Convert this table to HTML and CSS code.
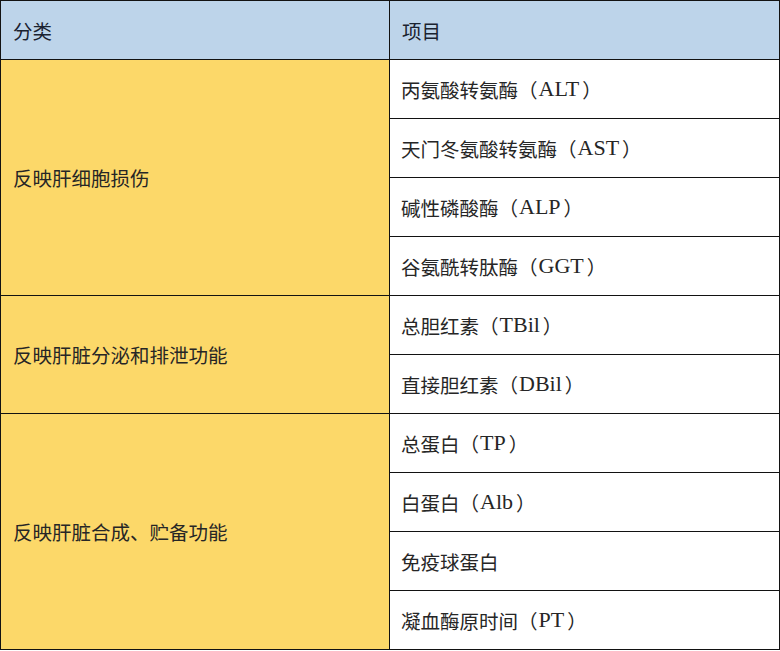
FILE: index.html
```html
<!DOCTYPE html>
<html lang="zh">
<head>
<meta charset="utf-8">
<link rel="stylesheet" href="styles.css">
</head>
<body>
<div class="table">
  <div class="cell head">分类</div>
  <div class="cell head">项目</div>

  <div class="cell cat span4">反映肝细胞损伤</div>
  <div class="cell item">丙氨酸转氨酶（<span class="en">ALT</span>）</div>
  <div class="cell item">天门冬氨酸转氨酶（<span class="en">AST</span>）</div>
  <div class="cell item">碱性磷酸酶（<span class="en">ALP</span>）</div>
  <div class="cell item">谷氨酰转肽酶（<span class="en">GGT</span>）</div>

  <div class="cell cat span2">反映肝脏分泌和排泄功能</div>
  <div class="cell item">总胆红素（<span class="en">TBil</span>）</div>
  <div class="cell item">直接胆红素（<span class="en">DBil</span>）</div>

  <div class="cell cat span4">反映肝脏合成、贮备功能</div>
  <div class="cell item">总蛋白（<span class="en">TP</span>）</div>
  <div class="cell item">白蛋白（<span class="en">Alb</span>）</div>
  <div class="cell item">免疫球蛋白</div>
  <div class="cell item">凝血酶原时间（<span class="en">PT</span>）</div>
</div>
</body>
</html>
```

FILE: styles.css
```css
html, body {
  margin: 0;
  padding: 0;
  background: #ffffff;
}

.table {
  width: 780px;
  box-sizing: border-box;
  display: grid;
  grid-template-columns: 388px 389px;
  grid-auto-rows: 58px;
  gap: 1px;
  padding: 1px;
  background: #121212;
  font-family: "Liberation Serif", "Noto Sans CJK SC", serif;
  font-size: 19.5px;
  color: #262626;
}

.cell {
  display: flex;
  align-items: center;
  padding-left: 12px;
  background: #ffffff;
  white-space: nowrap;
}

.head {
  background: #bdd4ea;
  color: #1a2230;
}

.cat {
  background: #fcd869;
  padding-left: 12px;
}

.item {
  padding-left: 11px;
}

.en {
  font-size: 22px;
  padding: 0 3px 0 1px;
}

.span4 {
  grid-row: span 4;
}

.span2 {
  grid-row: span 2;
}
```
